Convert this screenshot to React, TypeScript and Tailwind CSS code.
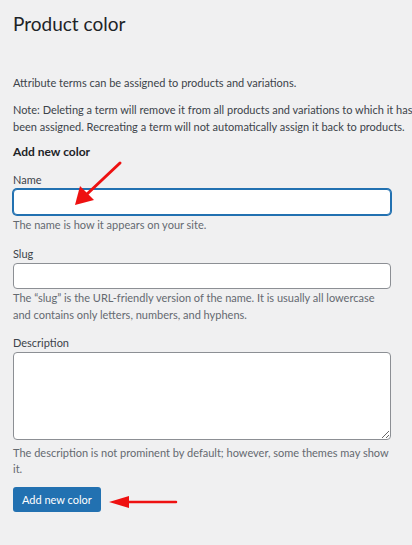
// App.tsx
export default function App() {
  const font = { fontFamily: 'Lato, "Liberation Sans", sans-serif' };

  return (
    <div
      className="relative w-[412px] h-[545px] overflow-hidden bg-[#f0f0f1] text-[11px] text-[#3c434a]"
      style={font}
    >
      <div className="pl-[13px] pr-[1px]">
        {/* Header */}
        <h1 className="pt-[9px] text-[19px] leading-[29px] font-normal text-[#1d2327]">
          Product color
        </h1>

        <p className="mt-[36px] leading-[18px] whitespace-nowrap">
          Attribute terms can be assigned to products and variations.
        </p>
        <p className="mt-[9px] leading-[17px] whitespace-nowrap">
          Note: Deleting a term will remove it from all products and variations to which it has
          <br />
          been assigned. Recreating a term will not automatically assign it back to products.
        </p>

        {/* Form */}
        <h2 className="mt-[7px] text-[12px] leading-[20px] font-bold text-[#1d2327]">
          Add new color
        </h2>

        <label className="block mt-[9px] leading-[17px]">Name</label>
        <input
          type="text"
          className="block mt-[1px] w-[95%] h-[26px] bg-white rounded-[4px] border border-[#2271b1] shadow-[0_0_0_1px_#2271b1] outline-none px-2"
        />
        <p className="mt-[1px] leading-[17px] text-[#646970] whitespace-nowrap">
          The name is how it appears on your site.
        </p>

        <label className="block mt-[12px] leading-[17px]">Slug</label>
        <input
          type="text"
          className="block mt-[1px] w-[95%] h-[26px] bg-white rounded-[4px] border border-[#8c8f94] outline-none px-2"
        />
        <p className="mt-[0px] leading-[17px] text-[#646970] whitespace-nowrap">
          The “slug” is the URL-friendly version of the name. It is usually all lowercase
          <br />
          and contains only letters, numbers, and hyphens.
        </p>

        <label className="block mt-[11px] leading-[17px]">Description</label>
        <textarea className="block mt-[1px] w-[95%] h-[88px] bg-white rounded-[4px] border border-[#8c8f94] outline-none px-2 resize" />
        <p className="mt-[5px] leading-[16px] text-[#646970] whitespace-nowrap">
          The description is not prominent by default; however, some themes may show
          <br />
          it.
        </p>

        <button className="block mt-[10px] h-[25px] px-[9px] rounded-[3px] bg-[#2271b1] text-white text-[11px] leading-[25px]">
          Add new color
        </button>
      </div>

      {/* Annotation arrows */}
      <svg
        className="absolute inset-0 pointer-events-none"
        width="412"
        height="545"
        viewBox="0 0 412 545"
      >
        <line x1="120" y1="163" x2="86" y2="195" stroke="#ee1111" strokeWidth="3" strokeLinecap="round" />
        <polygon points="75,205 80,186 94,200" fill="#ee1111" />
        <line x1="176" y1="502" x2="125" y2="502" stroke="#ee1111" strokeWidth="2.5" strokeLinecap="round" />
        <polygon points="109,502 129,496 129,508" fill="#ee1111" />
      </svg>
    </div>
  );
}
